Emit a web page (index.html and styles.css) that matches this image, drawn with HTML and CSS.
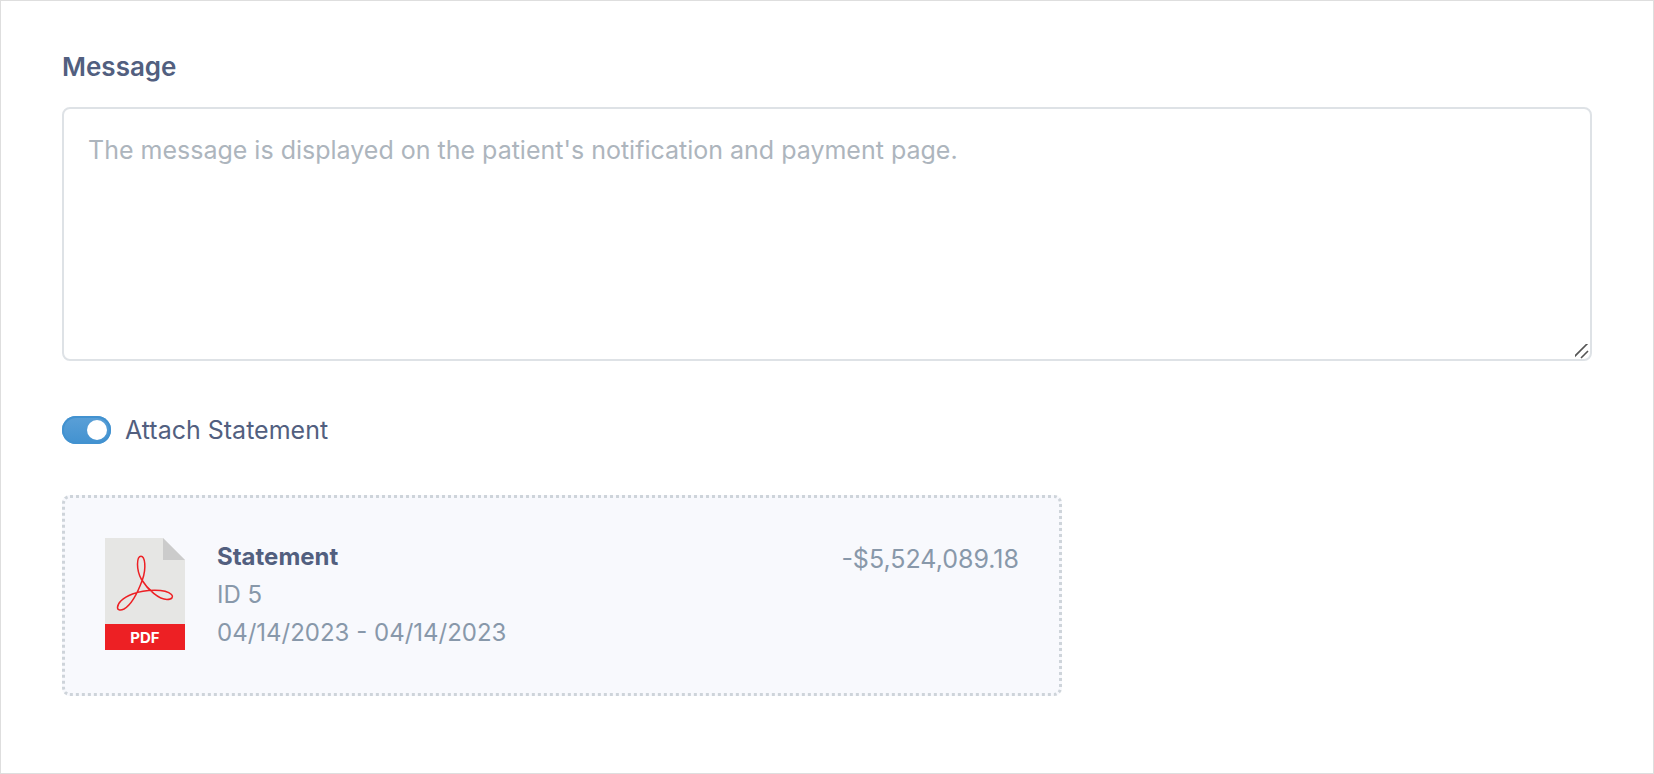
FILE: index.html
```html
<!DOCTYPE html>
<html lang="en">

<head>
    <meta charset="UTF-8">
    <meta name="viewport" content="width=device-width, initial-scale=1.0">
    <title>Message</title>

    <link rel="stylesheet" href="styles.css">
</head>

<body>
    <form class="panel">
        <label class="field-label" for="message">Message</label>
        <textarea id="message" class="message-box" placeholder="The message is displayed on the patient's notification and payment page."></textarea>

        <div class="switch-row">
            <input type="checkbox" id="attach" class="switch" checked>
            <label for="attach">Attach Statement</label>
        </div>

        <div class="attachment">
            <svg class="pdf-icon" viewBox="0 0 80 112" aria-hidden="true">
                <path fill="#e6e6e4" d="M0 0h58l22 22v65H0z"/>
                <path fill="#cbcbcb" d="M58 0l22 22H58z"/>
                <path fill="none" stroke="#ed2024" stroke-width="1.5" d="M36 18.2C31.5 18.2 31 32 36.5 41.5C43 52 54 61.5 62 61.5C67.5 61.5 68.5 58.5 66.5 56.5C60 50.5 40 51.500 27.5 56C17 60 12.5 65.5 12.5 69.5C12.5 72.5 16 72.5 19 71C26 67 33 54 37.5 41.5C41.5 30 40 18.2 36 18.2z"/>
                <path fill="#ed2024" d="M0 86h80v26H0z"/>
                <text x="40" y="105" class="pdf-text">PDF</text>
            </svg>
            <div class="details">
                <div class="title">Statement</div>
                <div>ID 5</div>
                <div>04/14/2023 - 04/14/2023</div>
            </div>
            <div class="amount">-$5,524,089.18</div>
        </div>
    </form>
</body>

</html>
```

FILE: styles.css
```css
* {
    margin: 0;
    padding: 0;
    box-sizing: border-box;
}

body {
    background-color: #fff;
    color: #525f7f;
    font-family: Inter, "Liberation Sans", sans-serif;
    font-size: 25px;
    line-height: 38px;
}

.panel {
    min-height: 100vh;
    padding: 47px 61px;
    border: 1px solid #dedede;
}

.field-label {
    display: block;
    margin-bottom: 21px;
    font-size: 26px;
    font-weight: 600;
}

.message-box {
    display: block;
    width: 100%;
    height: 254px;
    padding: 22px 24px;
    border: 2px solid #dee2e6;
    border-radius: 8px;
    outline: none;
    background-color: #fff;
    color: #525f7f;
    font: inherit;
    resize: vertical;
}

.message-box::placeholder {
    color: #adb5bd;
}

.message-box::-webkit-resizer {
    background: url("data:image/svg+xml,%3Csvg xmlns='http://www.w3.org/2000/svg' width='18' height='18'%3E%3Cpath d='M1 17L16 2M9 17l7-7' stroke='%23555' stroke-width='1.6'/%3E%3C/svg%3E") no-repeat right bottom;
}

.switch-row {
    display: flex;
    align-items: center;
    gap: 14px;
    margin: 50px 0 46px;
}

.switch {
    appearance: none;
    display: flex;
    align-items: center;
    width: 49px;
    height: 28px;
    padding: 0 4px;
    border-radius: 14px;
    background: #ced4da;
}

.switch::before {
    content: "";
    width: 20px;
    height: 20px;
    border-radius: 50%;
    background: #fff;
}

.switch:checked {
    justify-content: flex-end;
    background: linear-gradient(#5ba0d7, #4292d0);
    box-shadow: inset 0 0 0 2px #4292d0;
}

.attachment {
    display: flex;
    align-items: flex-start;
    gap: 32px;
    max-width: 1000px;
    padding: 40px 40px 41px;
    border: 3px dotted #ced4da;
    border-radius: 8px;
    background-color: #f8f9fd;
    color: #8898aa;
    font-size: 24px;
}

.pdf-icon {
    flex: none;
    width: 80px;
    height: 112px;
}

.pdf-text {
    fill: #fff;
    font-size: 15px;
    font-weight: 700;
    text-anchor: middle;
}

.title {
    color: #525f7f;
    font-weight: 700;
}

.amount {
    margin: 2px 0 0 auto;
    font-size: 25px;
}
```
